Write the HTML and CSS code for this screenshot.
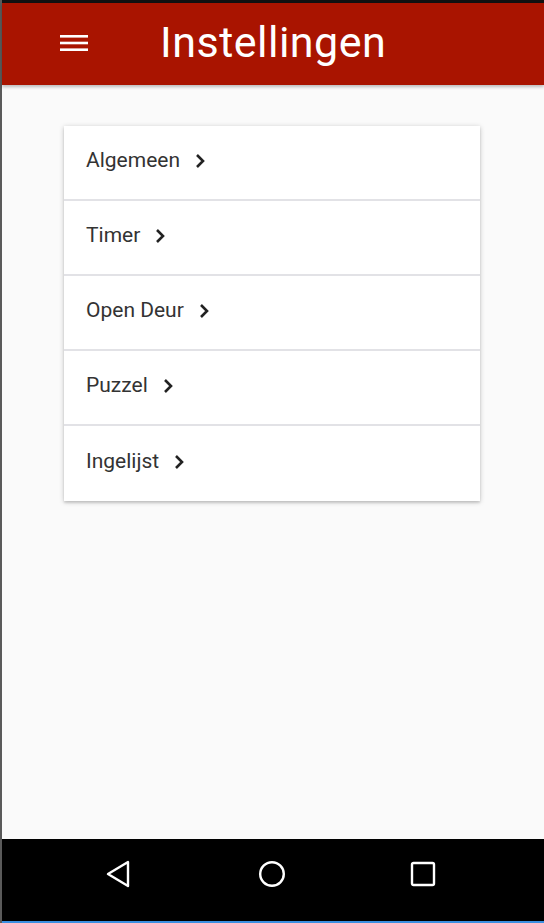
FILE: index.html
```html
<!DOCTYPE html>
<html>
<head>
<meta charset="utf-8">
<link rel="stylesheet" href="styles.css">
</head>
<body>
<div class="screen">
  <div class="status"></div>
  <header class="appbar">
    <svg class="menu" width="28" height="18" viewBox="0 0 28 18"><rect x="0" y="1" width="28" height="2.6" fill="#fff"/><rect x="0" y="7.7" width="28" height="2.6" fill="#fff"/><rect x="0" y="14.4" width="28" height="2.6" fill="#fff"/></svg>
    <h1 class="title">Instellingen</h1>
  </header>
  <main class="content">
    <div class="card">
      <div class="row"><span>Algemeen</span><svg class="chev" width="11" height="16" viewBox="0 0 11 16"><path d="M2 2 L8 8 L2 14" fill="none" stroke="#222" stroke-width="2.6"/></svg></div>
      <div class="row"><span>Timer</span><svg class="chev" width="11" height="16" viewBox="0 0 11 16"><path d="M2 2 L8 8 L2 14" fill="none" stroke="#222" stroke-width="2.6"/></svg></div>
      <div class="row"><span>Open Deur</span><svg class="chev" width="11" height="16" viewBox="0 0 11 16"><path d="M2 2 L8 8 L2 14" fill="none" stroke="#222" stroke-width="2.6"/></svg></div>
      <div class="row"><span>Puzzel</span><svg class="chev" width="11" height="16" viewBox="0 0 11 16"><path d="M2 2 L8 8 L2 14" fill="none" stroke="#222" stroke-width="2.6"/></svg></div>
      <div class="row"><span>Ingelijst</span><svg class="chev" width="11" height="16" viewBox="0 0 11 16"><path d="M2 2 L8 8 L2 14" fill="none" stroke="#222" stroke-width="2.6"/></svg></div>
    </div>
  </main>
  <nav class="navbar">
    <svg width="26" height="28" viewBox="0 0 26 28"><path d="M22 2 L22 26 L2 14 Z" fill="none" stroke="#fff" stroke-width="2.4" stroke-linejoin="round"/></svg>
    <svg width="28" height="28" viewBox="0 0 28 28"><circle cx="14" cy="14" r="11.8" fill="none" stroke="#fff" stroke-width="2.4"/></svg>
    <svg width="26" height="26" viewBox="0 0 26 26"><rect x="2" y="2" width="22" height="22" rx="1.5" fill="none" stroke="#fff" stroke-width="2.4"/></svg>
  </nav>
  <div class="bottomline"></div>
</div>
</body>
</html>
```
FILE: styles.css
```css
html, body {
  margin: 0;
  padding: 0;
  height: 100%;
}
body {
  font-family: Roboto, "Liberation Sans", sans-serif;
  background: #000;
}
.screen {
  width: 544px;
  height: 923px;
  display: flex;
  flex-direction: column;
  border-left: 2px solid #5a5a5a;
  box-sizing: border-box;
  background: #fafafa;
}
.status {
  height: 3px;
  background: #111;
  flex: none;
}
.appbar {
  height: 82px;
  flex: none;
  background: #a91400;
  display: flex;
  align-items: center;
  box-shadow: 0 2px 3px rgba(0,0,0,0.25);
  position: relative;
  z-index: 1;
}
.menu {
  margin-left: 58px;
  margin-top: -3px;
}
.title {
  margin: 0 0 0 72px;
  color: #fff;
  font-weight: 400;
  font-size: 43px;
  letter-spacing: 0.5px;
  line-height: 1;
  margin-top: -4px;
}
.content {
  flex: 1;
  background: #fafafa;
  padding: 41px 0 0 62px;
}
.card {
  width: 416px;
  background: #fff;
  box-shadow: 0 1px 5px rgba(0,0,0,0.22), 0 2px 2px rgba(0,0,0,0.1);
}
.row {
  height: 75px;
  display: flex;
  align-items: center;
  padding-left: 22px;
  padding-bottom: 6px;
  box-sizing: border-box;
  border-bottom: 2px solid #e2e2e6;
  font-size: 21px;
  color: #333;
}
.row:last-child {
  border-bottom: none;
  height: 75px;
}
.chev {
  margin-left: 15px;
  margin-top: 3px;
}
.navbar {
  height: 82px;
  flex: none;
  background: #000;
  display: flex;
  align-items: center;
}
.navbar svg { margin-top: -12px; }
.navbar svg:nth-child(1) { margin-left: 104px; }
.navbar svg:nth-child(2) { margin-left: 126px; }
.navbar svg:nth-child(3) { margin-left: 124px; }
.bottomline {
  height: 2px;
  flex: none;
  background: #3b8fe0;
}
```
